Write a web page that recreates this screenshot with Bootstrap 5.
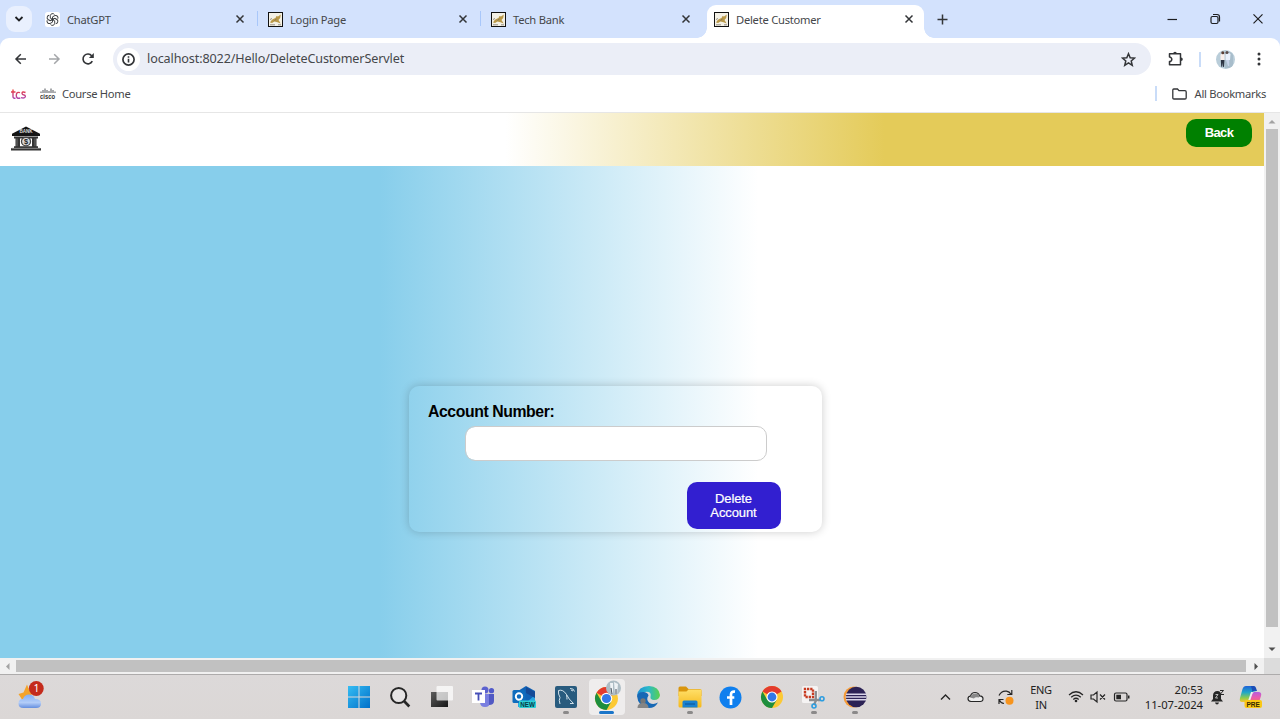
<!DOCTYPE html>
<html lang="en">
<head>
<meta charset="utf-8">
<title>Delete Customer</title>
<meta name="viewport" content="width=device-width, initial-scale=1">
<link href="https://cdn.jsdelivr.net/npm/bootstrap@5.3.0/dist/css/bootstrap.min.css" rel="stylesheet">
<style>
html,body{height:100%;overflow:hidden}
body{font-family:"Noto Sans","Open Sans",sans-serif;font-size:11.2px;line-height:16px;color:#45474a}
svg{display:block;flex:none}
.ui-strip{height:38px;background:#d3e2fd}
.ui-search{width:26px;height:26px;border-radius:9px;background:#e9f0fe;margin-left:6px}
.ui-tab{width:223px;height:38px;padding:0 0 0 13px;position:relative}
.ui-tab svg.fav{width:15px;height:15px}
.ui-tab .ttl{margin-left:7px;letter-spacing:-.25px;padding-top:2px}
.ui-tab .cls{margin-left:auto;margin-right:13px}
.ui-tab.sep::after{content:"";position:absolute;right:0;top:11px;width:1.5px;height:15px;background:#a8c7fa}
.ui-tab.on{width:217px;background:#fff;border-radius:9px 9px 0 0;height:33px;margin-top:5px;padding:0 0 5px 7px;margin-left:3px}
.ui-tab.on::before,.ui-tab.on::after{content:"";position:absolute;bottom:0;width:10px;height:10px}
.ui-tab.on::before{left:-10px;background:radial-gradient(circle at 0 0,transparent 9.5px,#fff 10px)}
.ui-tab.on::after{right:-10px;background:radial-gradient(circle at 100% 0,transparent 9.5px,#fff 10px)}
.ui-tools{height:42px;background:#fff;border-radius:9px 9px 0 0}
.ui-url{width:1038px;height:32px;border-radius:16px;background:#ebeef7;margin-left:15px;padding:0 15px 0 4px}
.ui-url .info{width:23px;height:23px;border-radius:50%;background:#fff}
.ui-url .addr{font-size:12.6px;margin-left:7px;letter-spacing:-.12px}
.vline{width:1.5px;height:15px;background:#c9dcf8}
.ui-marks{height:33px;border-bottom:1px solid #e6e6e6;padding:0 14px 5px 11px}
.site{height:545px}
.site-view{width:1264px;background:linear-gradient(to right,#87ceeb 30%,#fff 60%);font-family:"Liberation Sans",Arial,sans-serif}
.site-nav{height:53px;background:linear-gradient(to right,#fff 40%,#e4cb59 70%);padding:6px 12px 0 10px}
.btn-back{width:66px;height:28px;border-radius:10px;background:green;color:#fff;font-size:13px;font-weight:700;letter-spacing:-.6px;padding:0 0 2px;line-height:15px}
.btn-back:hover{background:green;color:#fff}
.acct{width:413px;height:146px;margin:220px 0 0 409px;border-radius:10px;box-shadow:0 0 10px rgba(0,0,0,.2);padding:17px 19px 0}
.acct label{font-size:15.8px;letter-spacing:-.42px;font-weight:700;line-height:18px;color:#000}
.acct .form-control{width:302px;height:35px;margin:5px 0 0 36.500px;border:1px solid #ccc;border-radius:10px;padding:0}
.btn-del{width:94px;height:47px;margin:21px 0 0 258.500px;border-radius:10px;background:#321fd0;color:#fff;font-size:13px;line-height:14px;padding:0 20px;letter-spacing:-.1px;-webkit-text-stroke:.2px #fff}
.vbar{width:16px;background:#f1f1f1}
.vbar .thumb{width:12px;flex:1;background:#c1c1c1}
.hbar{height:17px;background:#f1f1f1;border-bottom:1px solid #adabab}
.hbar .thumb{height:12px;width:1230px;background:#c1c1c1}
.hbar .corner{width:16px;height:16px;background:#dcdcdc}
.task{height:44px;background:linear-gradient(#dcd9d9,#dbd7d6);color:#222;position:relative}
.task .weather{width:44px;padding-left:17px}
.task .apps{margin-left:294.500px}
.app{width:41.3px;height:44px;position:relative}
.app.run::after{content:"";position:absolute;bottom:5px;left:18px;width:6px;height:3px;border-radius:2px;background:#8b8989}
.app.cur::before{content:"";position:absolute;left:3px;top:4px;width:36px;height:36px;border-radius:4px;background:#efeded}
.app.cur::after{content:"";position:absolute;bottom:5px;left:13px;width:15px;height:3px;border-radius:2px;background:#1a75c9}
.app svg{position:relative}
.tray{margin-left:auto;padding-right:17px}
.tray .txt{font-size:11px;line-height:15px;letter-spacing:-.3px}
.tray .txt.clock{font-size:11.3px;letter-spacing:-.08px;padding-bottom:1px}
</style>
</head>
<body class="d-flex flex-column">
<svg width="0" height="0" class="position-absolute">
 <defs>
  <symbol id="x" viewBox="0 0 10 10"><path d="M1.500 1.500l7 7M8.500 1.500l-7 7" stroke="#333538" stroke-width="1.500" fill="none"/></symbol>
  <symbol id="bird" viewBox="0 0 15 15"><rect x=".5" y=".5" width="14" height="14" fill="#f4f1e6" stroke="#111"/><path d="M2 10.500C3.500 7.500 5 7 7.500 6L8.500 4l1.500.5L12.800 2.500 12.200 6 10.500 8l2.200 3.500-3.200-1.200-3-.8-2.500 1.500z" fill="#b99848"/><path d="M2 7.500l2-1M2 12.800h5M10 12.800h3M6.500 8.500l2-1.500" stroke="#6a655c" stroke-width=".7"/></symbol>
  <symbol id="chrome" viewBox="0 0 24 24"><circle cx="12" cy="12" r="11" fill="#fcc934"/><path d="M12 12L2.470 6.500A11 11 0 0 1 21.530 6.500z" fill="#e33b2e"/><path d="M2.470 6.500A11 11 0 0 0 12 23L16.800 14.700 12 17.500 7.200 14.700z" fill="#1e8e3e"/><circle cx="12" cy="12" r="5.500" fill="#fff"/><circle cx="12" cy="12" r="4.400" fill="#3378e8"/></symbol>
  <linearGradient id="gw" x2="1" y2="1"><stop stop-color="#35bdf3"/><stop offset="1" stop-color="#006fc9"/></linearGradient>
  <linearGradient id="ge" x1="0" y1=".3" x2="1" y2=".3"><stop stop-color="#1c8fd6"/><stop offset=".5" stop-color="#2bb9c9"/><stop offset="1" stop-color="#5bd24a"/></linearGradient>
  <linearGradient id="gc" x2="0" y2="1"><stop stop-color="#1f62d8"/><stop offset=".4" stop-color="#20a7c8"/><stop offset=".75" stop-color="#8fcb4c"/><stop offset="1" stop-color="#f6c52e"/></linearGradient>
  <linearGradient id="gp" x2="0" y2="1"><stop stop-color="#a35ff0"/><stop offset=".5" stop-color="#ea5cad"/><stop offset="1" stop-color="#f8813d"/></linearGradient>
  <linearGradient id="gt" x2="0" y2="1"><stop stop-color="#ef3f36"/><stop offset="1" stop-color="#b044ad"/></linearGradient>
  <linearGradient id="gk" x2="0" y2="1"><stop stop-color="#82aef6"/><stop offset=".6" stop-color="#b3cdf8"/><stop offset="1" stop-color="#648edf"/></linearGradient>
  <linearGradient id="gs" x2="1" y2="1"><stop stop-color="#5d5d5d"/><stop offset="1" stop-color="#171717"/></linearGradient>
  <linearGradient id="gf" x2="0" y2="1"><stop stop-color="#ffdf68"/><stop offset="1" stop-color="#f5b91d"/></linearGradient>
 </defs>
</svg>

<!-- tab strip -->
<div class="ui-strip d-flex">
 <div class="d-flex align-items-center"><div class="ui-search d-flex align-items-center justify-content-center"><svg width="10" height="8" viewBox="0 0 10 8"><path d="M1.500 2L5 5.500 8.500 2" fill="none" stroke="#1f2023" stroke-width="1.800"/></svg></div></div>
 <div class="ui-tab sep d-flex align-items-center" style="width:226px">
  <svg class="fav" viewBox="0 0 15 15"><rect width="15" height="15" rx="2.500" fill="#fff"/><g fill="none" stroke="#3a3d40" stroke-width=".95"><path id="pl" d="M5.300 6.200V3.700a2.300 2.300 0 0 1 4.200-1.100M5.300 6.200l3.400 2"/><use href="#pl" transform="rotate(60 7.500 7.500)"/><use href="#pl" transform="rotate(120 7.500 7.500)"/><use href="#pl" transform="rotate(180 7.500 7.500)"/><use href="#pl" transform="rotate(240 7.500 7.500)"/><use href="#pl" transform="rotate(300 7.500 7.500)"/></g></svg>
  <span class="ttl">ChatGPT</span><svg class="cls" width="10" height="10"><use href="#x"/></svg></div>
 <div class="ui-tab sep d-flex align-items-center" style="padding-left:10px"><svg class="fav"><use href="#bird"/></svg><span class="ttl">Login Page</span><svg class="cls" width="10" height="10"><use href="#x"/></svg></div>
 <div class="ui-tab d-flex align-items-center" style="padding-left:10px"><svg class="fav"><use href="#bird"/></svg><span class="ttl">Tech Bank</span><svg class="cls" width="10" height="10"><use href="#x"/></svg></div>
 <div class="ui-tab on d-flex align-items-center"><svg class="fav"><use href="#bird"/></svg><span class="ttl">Delete Customer</span><svg class="cls" style="margin-right:10px" width="10" height="10"><use href="#x"/></svg></div>
 <div class="d-flex align-items-center flex-grow-1 ps-3" style="padding-right:16px"><svg class="me-auto" style="margin-left:-3px" width="11" height="11" viewBox="0 0 11 11"><path d="M5.500 .5v10M.5 5.500h10" stroke="#333538" stroke-width="1.500"/></svg>
  <svg width="98" height="12" viewBox="0 0 98 12"><g fill="none" stroke="#1d1e20" stroke-width="1.200"><path d="M1.500 6.500h9.500"/><rect x="45" y="3.500" width="7" height="7" rx="1.500"/><path d="M47 1.500h4a2.500 2.500 0 0 1 2.500 2.500v4.500"/><path d="M87.500 1.300l9 9M96.500 1.300l-9 9"/></g></svg></div>
</div>

<!-- toolbar -->
<div style="background:#d3e2fd"><div class="ui-tools d-flex align-items-center">
 <svg width="84" height="14" viewBox="0 0 84 14" style="margin-left:14px"><g fill="none" stroke-width="1.500"><path d="M12 7H2M6.800 2.200L2 7l4.800 4.800" stroke="#333538"/><path d="M35 7h10M40.200 2.200L45 7l-4.800 4.800" stroke="#a4a6a9"/><path d="M78.300 9.200A4.900 4.900 0 1 1 77.800 3.900" stroke="#333538" stroke-width="1.600"/></g><path d="M79.800 1v4.900h-4.900z" fill="#333538"/></svg>
 <div class="ui-url d-flex align-items-center"><span class="info d-flex align-items-center justify-content-center"><svg width="13" height="13" viewBox="0 0 13 13"><circle cx="6.500" cy="6.500" r="5.600" fill="none" stroke="#333538" stroke-width="1.700"/><path d="M6.500 5.700v3.900M6.500 3.200v1.500" stroke="#333538" stroke-width="1.600"/></svg></span><span class="addr">localhost:8022/Hello/DeleteCustomerServlet</span>
 <svg class="ms-auto" width="15" height="15" viewBox="0 0 16 16"><path d="M8 1.800l1.800 4.300 4.700.4-3.600 3.100 1.100 4.600L8 11.700l-4 2.500 1.100-4.600L1.500 6.500l4.700-.4z" fill="none" stroke="#333538" stroke-width="1.600"/></svg></div>
 <svg width="18" height="18" viewBox="0 0 18 18" style="margin-left:16px"><path d="M2.500 3.800h11v11h-11v-3.200a2.200 2.200 0 0 0 0-4.600z" fill="none" stroke="#333538" stroke-width="1.500" stroke-linejoin="round"/><path d="M6.200 3.500a1.800 1.800 0 0 1 3.600 0zM14 7.500a1.800 1.800 0 0 1 0 3.600z" fill="#333538"/></svg>
 <span class="vline" style="margin-left:14px"></span>
 <svg width="19" height="19" viewBox="0 0 19 19" style="margin-left:15px"><circle cx="9.500" cy="9.500" r="9.500" fill="#b9cdd9"/><path d="M9 2q6-1 8 3v10q-3 4-8 3z" fill="#a8bdcb"/><path d="M4.500 4.500q2.500-2 4 0v6h-4z" fill="#f8efec"/><path d="M9.500 4q3-2 5 0l-.5 6H9.500z" fill="#e9f1fc"/><circle cx="6.800" cy="2.800" r="1.500" fill="#5b3e34"/><circle cx="11" cy="2.500" r="1.500" fill="#5b4c4b"/><path d="M4.800 10h3.700l-.5 7-1-.3-.3-4-.5 4h-1z" fill="#2d3543"/><path d="M10 10h3.200v6h-1.200z" fill="#c7d4ea"/></svg>
 <svg width="4" height="16" viewBox="0 0 4 16" style="margin-left:22px"><g fill="#333538"><circle cx="2" cy="3" r="1.500"/><circle cx="2" cy="8" r="1.500"/><circle cx="2" cy="13" r="1.500"/></g></svg>
</div></div>

<!-- bookmarks -->
<div class="ui-marks d-flex align-items-center bg-white">
 <svg width="15" height="11" viewBox="0 0 15 11" style="margin-top:1px"><path d="M2 .5v7q0 2 2.500 1.800M0 3h4.500M9 3.700Q5.500 2.300 5.300 6.200T9.300 9M14.500 3.500Q11 2 11 4.500q.2 1.300 2 1.500 1.500.2 1.300 1.700-.8 2-4.300 1" fill="none" stroke="url(#gt)" stroke-width="1.400"/></svg>
 <svg width="16" height="12" viewBox="0 0 16 12" style="margin-left:14px"><path d="M1 3.500v1.500M3 2v3M5 .5v4.500M7 2v3M9 3v2M11 .5v4.500M13 2v3M15 3.500v1.500" stroke="#50545a" stroke-width="1"/><text x="0" y="10.800" font-family="Liberation Sans" font-size="6.500" font-weight="bold" fill="#333" textLength="15" lengthAdjust="spacingAndGlyphs">cisco</text></svg>
 <span style="margin-left:6px;letter-spacing:-.3px;padding-top:1px">Course Home</span>
 <span class="vline ms-auto"></span>
 <svg width="15" height="12" viewBox="0 0 15 12" style="margin-left:15px"><path d="M.8 2q0-1 1-1h3.700l1.500 1.700h6q1.200 0 1.200 1.200v5.900q0 1.200-1.200 1.200H2Q.8 11 .8 9.800z" fill="none" stroke="#333538" stroke-width="1.300"/></svg>
 <span style="margin-left:8px;letter-spacing:-.3px;padding-top:1px">All Bookmarks</span>
</div>

<!-- page -->
<div class="site d-flex">
 <main class="site-view">
  <nav class="site-nav d-flex justify-content-between align-items-start">
   <svg width="32" height="25" viewBox="0 0 32 26" preserveAspectRatio="none" style="margin-top:6.500px"><path d="M16 .5L30 8v2.500H2V8z" fill="#151515"/><path d="M4 11h24v2H4zM5.500 13h4.500v9H5.500zM22 13h4.500v9H22zM4 21h24v2H4zM1 23.200h30v2.300H1z" fill="#333"/><path d="M7 13v8M25 13v8M2 23.200h28" stroke="#888" stroke-width=".7"/><circle cx="16" cy="16.200" r="4.500" fill="#ddd" stroke="#444" stroke-width="1.300"/><text x="16" y="19" font-family="Liberation Sans" font-size="7.500" font-weight="bold" text-anchor="middle" fill="#222">$</text><text x="16" y="7.600" font-family="Liberation Sans" font-size="4.600" font-weight="bold" text-anchor="middle" fill="#ddd" textLength="13">BANK</text></svg>
   <button class="btn btn-back border-0">Back</button>
  </nav>
  <form class="acct">
   <label class="d-block" for="acc">Account Number:</label>
   <input id="acc" class="form-control" type="text">
   <button type="button" class="btn btn-del border-0 d-block">Delete Account</button>
  </form>
 </main>
 <div class="vbar d-flex flex-column align-items-center">
  <svg width="16" height="16" viewBox="0 0 16 16"><path d="M4.500 10.500L8 7l3.500 3.500z" fill="#a3a3a3"/></svg>
  <div class="thumb"></div>
  <svg width="16" height="31" viewBox="0 0 16 31"><path d="M4.500 20.500h7L8 24z" fill="#505050"/></svg>
 </div>
</div>
<div class="hbar d-flex align-items-center">
 <svg width="16" height="15" viewBox="0 0 16 15"><path d="M9.500 4v7L6 7.500z" fill="#a3a3a3"/></svg>
 <div class="thumb"></div>
 <svg class="mx-auto" width="16" height="15" viewBox="0 0 16 15"><path d="M7.500 4v7l3.500-3.500z" fill="#505050"/></svg>
 <div class="corner"></div>
</div>

<!-- taskbar -->
<div class="task d-flex align-items-center">
 <div class="weather"><svg width="28" height="28" viewBox="0 0 28 28" style="margin-top:-4px"><path d="M1.500 13l5-1.500 3.500-8 2 5 5 3-6 5-6 2z" fill="#f3a32b"/><path d="M6.500 27q-5 0-5-4.500 0-4.300 4.500-4.500 1.500-4.500 6-4.500t6 4.500q6 0 6 4.500 0 4.500-5 4.500z" fill="url(#gk)"/><circle cx="19.300" cy="7.500" r="7.400" fill="#c42b1c"/><text x="19.500" y="11.300" text-anchor="middle" font-size="10.500" fill="#fff">1</text></svg></div>
 <div class="apps d-flex">
  <div class="app d-flex align-items-center justify-content-center"><svg width="22" height="22" viewBox="0 0 22 22"><path d="M0 0h10.500v10.500H0zM11.500 0H22v10.500H11.500zM0 11.500h10.500V22H0zM11.500 11.500H22V22H11.500z" fill="url(#gw)"/></svg></div>
  <div class="app d-flex align-items-center justify-content-center"><svg width="22" height="22" viewBox="0 0 22 22"><circle cx="9.700" cy="9.500" r="7.600" fill="#e6e4e4" stroke="#262626" stroke-width="2"/><path d="M15 15l5.300 5.500" stroke="#262626" stroke-width="2.600"/></svg></div>
  <div class="app d-flex align-items-center justify-content-center"><svg width="22" height="22" viewBox="0 0 22 22"><rect y="6" width="17" height="15" fill="url(#gs)"/><rect x="5.500" y="0" width="16.500" height="14.500" rx="1" fill="#fff" opacity=".72"/></svg></div>
  <div class="app d-flex align-items-center justify-content-center"><svg width="24" height="22" viewBox="0 0 24 22"><circle cx="14" cy="4" r="3.500" fill="#5b61cf"/><circle cx="20.500" cy="4.700" r="2.600" fill="#5059c9"/><path d="M9 8h10v8q0 5-5 5t-5-5z" fill="#7a7fe0"/><path d="M18 8h5v7q0 4-5 4z" fill="#5159c4"/><rect x="1" y="4" width="13" height="13" fill="#fff"/><path d="M4 7.500h7M7.500 7.500v7" stroke="#464eb8" stroke-width="1.800"/></svg></div>
  <div class="app d-flex align-items-center justify-content-center"><svg width="24" height="22" viewBox="0 0 24 22"><path d="M6 5l8-5 9 5v16H6z" fill="#1062b6"/><path d="M6 10l9 6 8-7v12H6z" fill="#29a5e2"/><path d="M14 1l9 5v6l-9-5z" fill="#154a97"/><rect x=".5" y="4" width="13" height="13" rx="1.500" fill="#0f6cbd"/><circle cx="7" cy="10.500" r="3.200" fill="none" stroke="#fff" stroke-width="1.900"/><rect x="7" y="14.500" width="17" height="7.500" rx="1" fill="#2cd0d5"/><text x="15.500" y="20.500" text-anchor="middle" font-family="Liberation Sans" font-size="6.300" font-weight="bold" fill="#063b48">NEW</text></svg></div>
  <div class="app run d-flex align-items-center justify-content-center"><svg width="22" height="22" viewBox="0 0 22 22"><rect width="22" height="22" rx="2" fill="#285b7e"/><path d="M5 18q-1.500-4 0-6.500-2-3.500-1.500-7Q8 3 11.500 8.500 13.500 13 18.500 17.500l-3.500 0M11.500 8.500q.5 3 .5 5M15 2.500q4-.2 4.500 3M16 4l2 1" fill="none" stroke="#d1e1ea" stroke-width="1"/></svg></div>
  <div class="app cur d-flex align-items-center justify-content-center"><svg width="28" height="32" viewBox="0 0 28 32" style="top:-1px"><svg x="1" y="6" width="25" height="25"><use href="#chrome"/></svg><circle cx="20.500" cy="8" r="7.500" fill="#aebdc5"/><path d="M17 3h3v11l-2-1zM21 2l4 2-1 10h-2z" fill="#eef2f5"/><path d="M18 8l1 6M23 9v5" stroke="#46515c"/></svg></div>
  <div class="app d-flex align-items-center justify-content-center"><svg width="23" height="22" viewBox="0 0 23 22"><path d="M0 10Q1 0 12 0q10 .5 11 9-.5 5-6 5-4-.3-3.500-3Q15 5 8 6 2 6.500 0 10z" fill="url(#ge)"/><path d="M0 10q1-4.500 7-4 4 .5 4.500 3.500-3 4 1 7.500 4 2 8.500-.5Q18 22 12 22 1 21 0 10z" fill="#1768b5"/><circle cx="6" cy="15" r="2.700" fill="#777"/><path d="M.5 22q0-5 5.500-5t5.500 5z" fill="#858585"/></svg></div>
  <div class="app run d-flex align-items-center justify-content-center"><svg width="24" height="22" viewBox="0 0 24 22"><path d="M.5 2q0-1.500 1.500-1.500h6l2.500 2.500H22q1.500 0 1.500 1.500V10H.5z" fill="#d9950d"/><path d="M.5 5.500h8l2-2H23.500V20q0 1.500-1.500 1.500H2Q.5 21.500 .5 20z" fill="url(#gf)"/><path d="M4.500 21.500V16q0-1.500 1.500-1.500h12q1.500 0 1.500 1.500v5.500z" fill="#1981d0"/><path d="M7 18h10" stroke="#0b5298"/></svg></div>
  <div class="app d-flex align-items-center justify-content-center"><svg width="23" height="23" viewBox="0 0 23 23"><circle cx="11.500" cy="11.500" r="11" fill="#0f7fee"/><path d="M12 19V8.500q0-3.300 4-2.800M8 11.500h7.300" fill="none" stroke="#fff" stroke-width="2.700"/></svg></div>
  <div class="app d-flex align-items-center justify-content-center"><svg width="24" height="24"><use href="#chrome"/></svg></div>
  <div class="app run d-flex align-items-center justify-content-center"><svg width="24" height="23" viewBox="0 0 24 23"><rect x="1" width="16" height="17" rx="1.500" fill="#f5f3f3"/><path d="M11.500 3H4v8h8V3" fill="none" stroke="#c73a20" stroke-width="2.400" stroke-dasharray="2.300 .9"/><path d="M14.800 5v10l-2 4M8 14h11" fill="none" stroke="#8b8d90" stroke-width="2.300"/><circle cx="13" cy="20" r="2" fill="none" stroke="#2d9de0" stroke-width="1.600"/><circle cx="21" cy="12.700" r="2" fill="none" stroke="#2d9de0" stroke-width="1.600"/></svg></div>
  <div class="app run d-flex align-items-center justify-content-center"><svg width="24" height="22" viewBox="0 0 24 22"><circle cx="11" cy="11" r="10.500" fill="#f59b38"/><circle cx="13.200" cy="11" r="10.300" fill="#2c2255"/><path d="M3 8.300h20.300M2.500 11h21M3 13.700h20.300" stroke="#d8d3e8" stroke-width="1.600"/></svg></div>
 </div>
 <div class="tray d-flex align-items-center">
  <svg width="76" height="20" viewBox="0 0 76 20"><path d="M1 12.500L5.500 8l4.500 4.500" fill="none" stroke="#262626" stroke-width="1.400"/><path d="M31 14.500q-3-.3-3-2.800 0-2.200 2.500-2.500Q31.500 5.500 35 5.500t4.500 3.300q3.500.2 3.500 3t-3 2.700z" fill="#eee" stroke="#262626" stroke-width="1.200"/><path d="M30 10.500Q31.500 6.500 35.500 6.500t3.500 4q-4-1-5 1z" fill="#888"/><path d="M59 8.500Q61.500 3.500 66.500 4.200q3 .5 4.500 3M71.800 3v4.500h-4.500M59 17v-4.500H63.500M59 12.500q1.500 3.500 5 4" fill="none" stroke="#262626" stroke-width="1.200"/><circle cx="69.500" cy="13.700" r="4" fill="#f7941d"/></svg>
  <div class="txt text-center" style="width:28px;margin-left:11px">ENG<br>IN</div>
  <svg width="64" height="18" viewBox="0 0 64 18" style="margin-left:13px"><g fill="none" stroke="#262626" stroke-width="1.200"><path d="M1 7q7-6.500 14 0M3.200 9.300q4.800-4.500 9.600 0M5.300 11.500q2.700-2.500 5.400 0"/><path d="M23 7v4h2.500l3.500 3V4l-3.500 3zM32 6.500l5 5M37 6.500l-5 5"/><rect x="46.500" y="5" width="12.500" height="8" rx="1.500"/></g><circle cx="8" cy="13" r="1.300" fill="#262626"/><path d="M48.300 6.700h4.700v4.600h-4.700zM60 7.500h1.500v3H60z" fill="#262626"/></svg>
  <div class="txt clock text-end" style="width:66px;margin-left:5px">20:53<br><span class="text-nowrap">11-07-2024</span></div>
  <svg width="15" height="16" viewBox="0 0 15 16" style="margin-left:7px"><path d="M1 12.500L3 10V6.500Q3.200 2 7.500 2 11 2 11 6v4l2 2.500zM5 13.500h4q-.5 2-2 2t-2-2z" fill="#262626"/><path d="M10 1.500h3.500L10 5.500h4" fill="none" stroke="#262626"/><path d="M5.500 5.500H8L5.500 9H8" fill="none" stroke="#ddd" stroke-width=".8"/></svg>
  <svg width="24" height="24" viewBox="0 0 24 24" style="margin-left:14px"><path d="M7 1h7q2 0 2.500 2l1 3-4 1-3 7q-1 3-3 3H3q-3 0-2-4L3.500 4Q4.500 1 7 1z" fill="url(#gc)"/><path d="M14 5l-2 5 3-3h5q3 .5 2 4l-2 6q-1 3-3 3H9z" fill="url(#gp)"/><path d="M14 7l-3 9h-2l3-9z" fill="#eee"/><path d="M12 1h2.500q2 0 2.500 2l1 3q-4-1-4.500 1z" fill="#1b4db6"/><rect x="5.500" y="15" width="17.500" height="8" rx="2" fill="#fbc814"/><text x="14.200" y="21.500" font-family="Liberation Sans" font-size="6.500" font-weight="bold" text-anchor="middle" fill="#352900">PRE</text></svg>
 </div>
</div>
<script src="https://cdn.jsdelivr.net/npm/bootstrap@5.3.0/dist/js/bootstrap.bundle.min.js"></script>
</body>
</html>
